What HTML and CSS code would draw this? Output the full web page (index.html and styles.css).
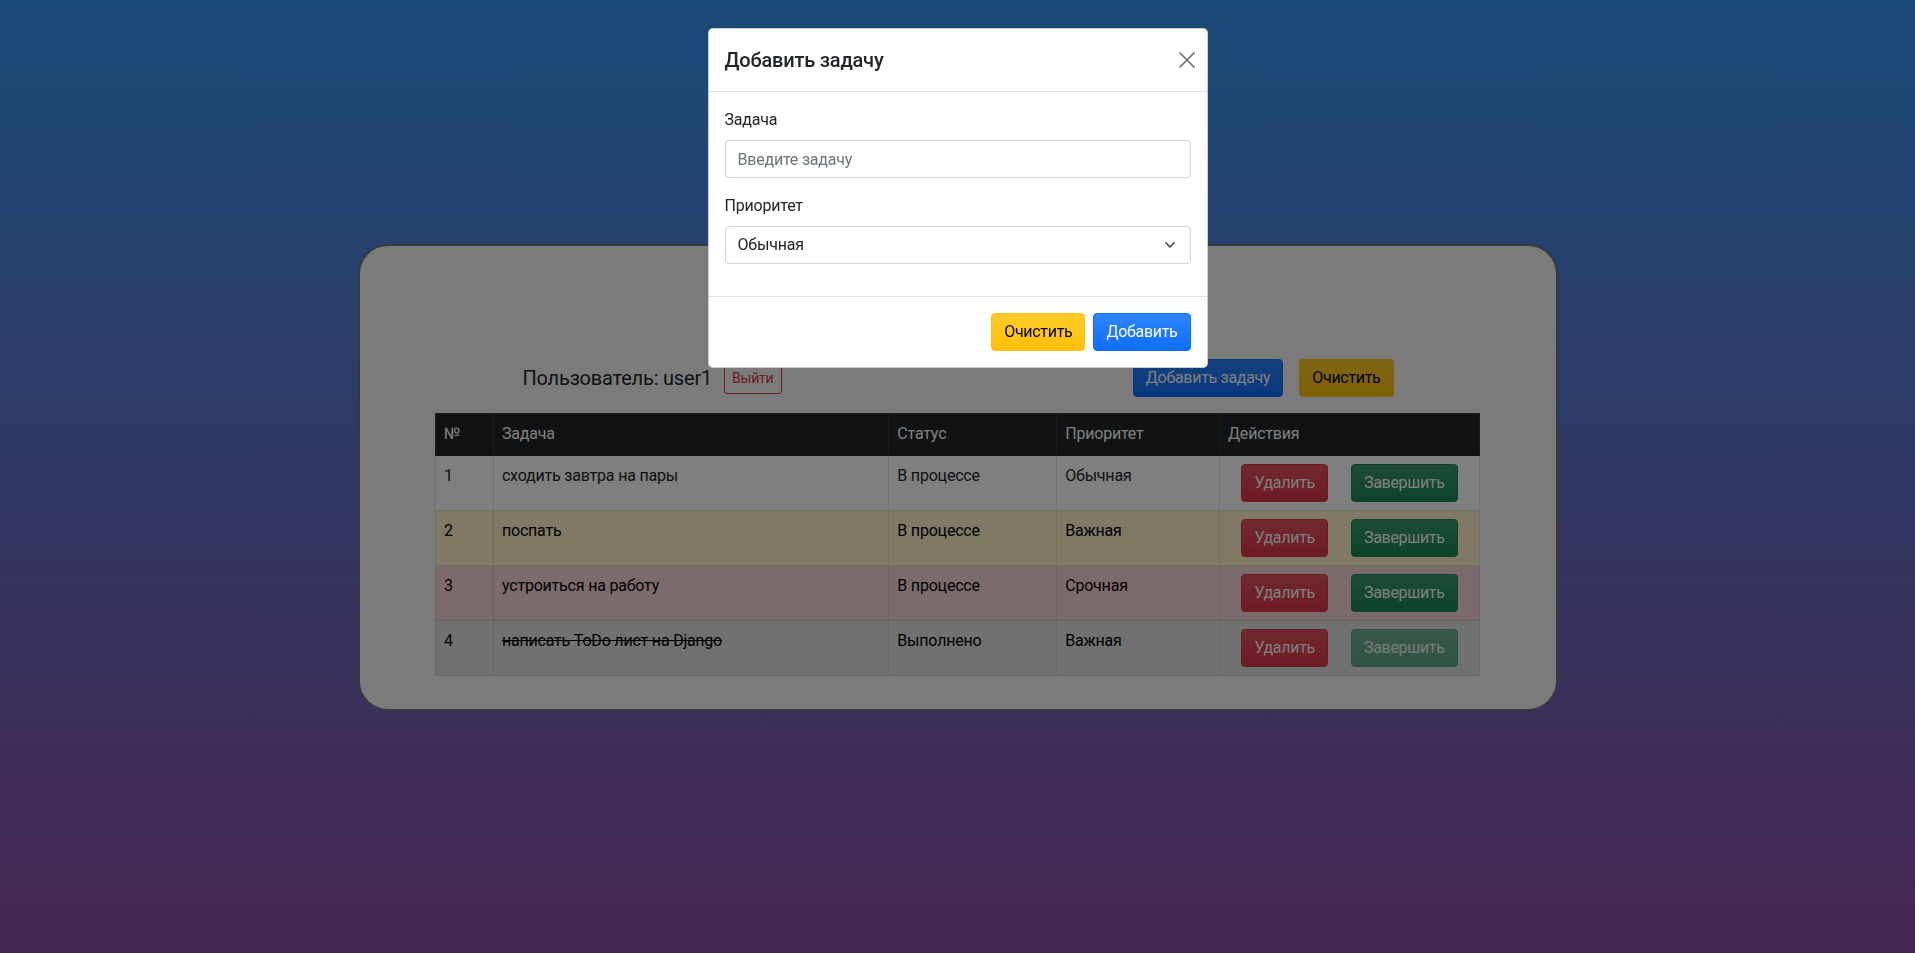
FILE: index.html
```html
<!DOCTYPE html>
<html lang="ru">
<head>
<meta charset="utf-8">
<title>ToDo лист</title>
<link rel="stylesheet" href="styles.css">
</head>
<body>
<main class="page">
  <section class="card">
    <div class="toolbar">
      <div class="user">
        <span class="user-name">Пользователь: user1</span>
        <button class="btn btn-sm btn-outline-danger">Выйти</button>
      </div>
      <div class="actions">
        <button class="btn btn-primary">Добавить задачу</button>
        <button class="btn btn-warning">Очистить</button>
      </div>
    </div>
    <table class="tasks">
      <colgroup>
        <col class="c-num"><col class="c-task"><col class="c-status"><col class="c-prio"><col class="c-act">
      </colgroup>
      <thead>
        <tr><th>№</th><th>Задача</th><th>Статус</th><th>Приоритет</th><th>Действия</th></tr>
      </thead>
      <tbody>
        <tr class="row-default">
          <td>1</td><td>сходить завтра на пары</td><td>В процессе</td><td>Обычная</td>
          <td class="act-cell"><div class="act"><button class="btn btn-danger">Удалить</button><button class="btn btn-success">Завершить</button></div></td>
        </tr>
        <tr class="row-warning">
          <td>2</td><td>поспать</td><td>В процессе</td><td>Важная</td>
          <td class="act-cell"><div class="act"><button class="btn btn-danger">Удалить</button><button class="btn btn-success">Завершить</button></div></td>
        </tr>
        <tr class="row-danger">
          <td>3</td><td>устроиться на работу</td><td>В процессе</td><td>Срочная</td>
          <td class="act-cell"><div class="act"><button class="btn btn-danger">Удалить</button><button class="btn btn-success">Завершить</button></div></td>
        </tr>
        <tr class="row-secondary">
          <td>4</td><td><s>написать ToDo лист на Django</s></td><td>Выполнено</td><td>Важная</td>
          <td class="act-cell"><div class="act"><button class="btn btn-danger">Удалить</button><button class="btn btn-success is-disabled" disabled>Завершить</button></div></td>
        </tr>
      </tbody>
    </table>
  </section>
</main>

<div class="backdrop"></div>
<div class="modal">
  <div class="modal-dialog">
    <div class="modal-content">
      <div class="modal-header">
        <h5 class="modal-title">Добавить задачу</h5>
        <button class="btn-close" aria-label="Закрыть">
          <svg viewBox="0 0 16 16" width="16" height="16"><path d="M1 1 L15 15 M15 1 L1 15" stroke="#000" stroke-width="1.7" stroke-linecap="round" fill="none"/></svg>
        </button>
      </div>
      <div class="modal-body">
        <div class="field">
          <label class="form-label">Задача</label>
          <input class="form-control" type="text" placeholder="Введите задачу">
        </div>
        <div class="field">
          <label class="form-label">Приоритет</label>
          <div class="form-select">
            <span>Обычная</span>
            <svg viewBox="0 0 10 6" width="10" height="6"><path d="M0.8 0.8 L5 5 L9.2 0.8" fill="none" stroke="#343a40" stroke-width="1.4" stroke-linecap="round" stroke-linejoin="round"/></svg>
          </div>
        </div>
      </div>
      <div class="modal-footer">
        <button class="btn btn-warning">Очистить</button>
        <button class="btn btn-primary">Добавить</button>
      </div>
    </div>
  </div>
</div>
</body>
</html>
```

FILE: styles.css
```css
* { box-sizing: border-box; }

html, body {
  margin: 0;
  height: 100%;
}

body {
  font-family: Roboto, "Open Sans", sans-serif;
  font-size: 16px;
  line-height: 1.5;
  letter-spacing: -0.2px;
  color: #212529;
  background: linear-gradient(180deg, #3696f0 0%, #8e4aa2 100%);
  min-height: 953px;
  overflow: hidden;
}

.page {
  padding-top: 244px;
}

.card {
  width: 1200px;
  margin: 0 auto;
  background: #f6f6f6;
  border: 2px solid #6c757d;
  border-radius: 30px;
  padding: 113px 0 33px;
}

.toolbar {
  display: flex;
  align-items: center;
  justify-content: space-between;
  height: 38px;
  padding: 0 162px 0 163px;
}

.user {
  display: flex;
  align-items: center;
  gap: 12px;
}

.user-name {
  font-size: 20px;
  line-height: 30px;
}

.actions {
  display: flex;
  gap: 16px;
}

/* Buttons */
.btn {
  display: inline-block;
  font-family: inherit;
  font-size: 16px;
  line-height: 24px;
  letter-spacing: -0.3px;
  padding: 6px 12px;
  border: 1px solid transparent;
  border-radius: 4px;
  background-image: linear-gradient(180deg, rgba(255,255,255,.15), rgba(255,255,255,0));
  cursor: pointer;
  white-space: nowrap;
}

.btn-sm {
  font-size: 14px;
  line-height: 21px;
  letter-spacing: -0.2px;
  padding: 4px 7px;
  border-radius: 3px;
}

.btn-primary { background-color: #0d6efd; border-color: #0d6efd; color: #fff; }
.btn-warning { background-color: #ffc107; border-color: #ffc107; color: #000; }
.btn-danger { background-color: #dc3545; border-color: #dc3545; color: #fff; }
.btn-success { background-color: #198754; border-color: #198754; color: #fff; }
.btn-outline-danger { background: transparent; border-color: #dc3545; color: #dc3545; }
.btn.is-disabled { opacity: .65; }

/* Table */
.tasks {
  width: 1045px;
  margin: 16px auto 0;
  border-collapse: collapse;
  vertical-align: top;
}

.c-num { width: 58px; }
.c-task { width: 396px; }
.c-status { width: 168px; }
.c-prio { width: 163px; }
.c-act { width: 260px; }

.tasks th, .tasks td {
  padding: 8px;
  text-align: left;
  vertical-align: top;
  border: 1px solid #dee2e6;
  font-weight: 400;
}

.tasks thead th {
  background: #212529;
  color: #fff;
  border-color: #373b3e;
}

.tasks tbody tr:first-child td {
  border-top: 2px solid #212529;
}

.row-default td { background: #fff; }
.row-warning td { background: #fff3cd; color: #000; border-color: #e6dbb9; }
.row-danger td { background: #f8d7da; color: #000; border-color: #dfc2c4; }
.row-secondary td { background: #e2e3e5; color: #000; border-color: #cbccce; }

.act {
  display: flex;
  justify-content: center;
  gap: 23px;
}

/* Modal */
.backdrop {
  position: fixed;
  inset: 0;
  background: rgba(0, 0, 0, .5);
}

.modal {
  position: fixed;
  inset: 0;
  display: flex;
  justify-content: center;
  align-items: flex-start;
}

.modal-dialog {
  width: 500px;
  margin-top: 28px;
}

.modal-content {
  background: #fff;
  border: 1px solid rgba(0, 0, 0, .2);
  border-radius: 5px;
}

.modal-header {
  display: flex;
  align-items: center;
  justify-content: space-between;
  padding: 16px;
  border-bottom: 1px solid #dee2e6;
}

.modal-title {
  margin: 0;
  font-size: 20px;
  font-weight: 500;
  line-height: 30px;
}

.btn-close {
  display: flex;
  padding: 4px;
  margin: -8px -8px -8px auto;
  border: 0;
  background: transparent;
  opacity: .55;
}

.modal-body {
  padding: 16px;
}

.field {
  margin-bottom: 16px;
}

.form-label {
  display: block;
  margin-bottom: 8px;
}

.form-control,
.form-select {
  display: block;
  width: 100%;
  height: 38px;
  padding: 6px 12px;
  font-family: inherit;
  font-size: 16px;
  line-height: 24px;
  letter-spacing: inherit;
  color: #212529;
  background: #fff;
  border: 1px solid #ced4da;
  border-radius: 4px;
}

.form-control::placeholder {
  color: #6c757d;
}

.form-select {
  display: flex;
  align-items: center;
  justify-content: space-between;
  padding-right: 15px;
}

.modal-footer {
  display: flex;
  justify-content: flex-end;
  align-items: center;
  padding: 12px;
  border-top: 1px solid #dee2e6;
}

.modal-footer .btn {
  margin: 4px;
}
```
